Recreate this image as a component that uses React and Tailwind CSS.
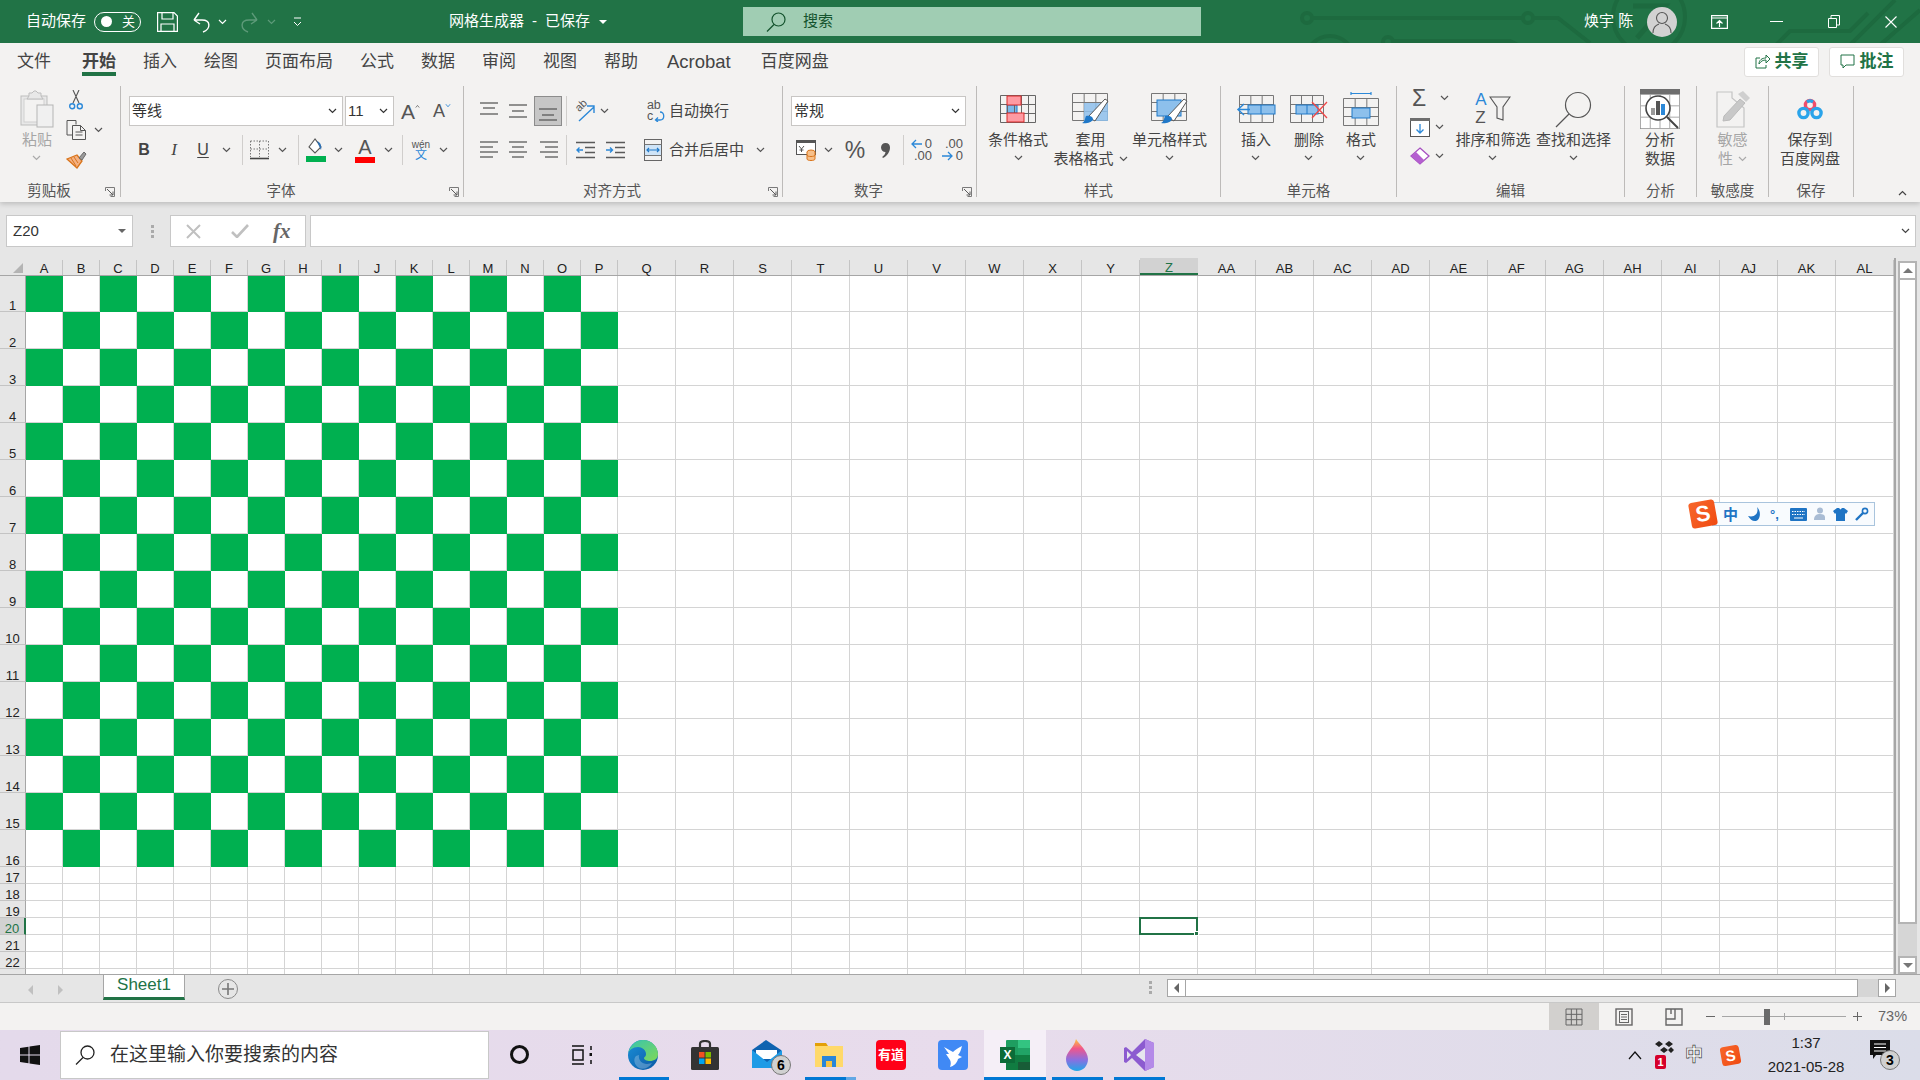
import React from "react";

const COLS = ["A","B","C","D","E","F","G","H","I","J","K","L","M","N","O","P","Q","R","S","T","U","V","W","X","Y","Z","AA","AB","AC","AD","AE","AF","AG","AH","AI","AJ","AK","AL"];
const GRAY = "#5a5a5a";
const BLUE = "#2b88d8";

const Chev = ({ c = "#555", up = false }) => (
  <svg width="9" height="6" viewBox="0 0 9 6" className="shrink-0">
    <path d={up ? "M1 5l3.5-3.5L8 5" : "M1 1l3.5 3.5L8 1"} fill="none" stroke={c} strokeWidth="1.2" />
  </svg>
);

const GridLines = ({ x, y, w, h, cols, rows, c = "#6e6e6e" }) => {
  const v = [], hz = [];
  for (let i = 0; i <= cols; i++) v.push(x + (w * i) / cols);
  for (let i = 0; i <= rows; i++) hz.push(y + (h * i) / rows);
  return (
    <g stroke={c} strokeWidth="1" fill="none">
      {v.map((a) => <path key={"v" + a} d={`M${a} ${y}V${y + h}`} />)}
      {hz.map((a) => <path key={"h" + a} d={`M${x} ${a}H${x + w}`} />)}
    </g>
  );
};

const Lines = ({ rows, w = 18, h = 30 }) => (
  <svg width={w} height={h} viewBox={`0 0 ${w} ${h}`}>
    {rows.map(([a, b, y], i) => <path key={i} d={`M${a} ${y}H${b}`} stroke={GRAY} strokeWidth="1.3" />)}
  </svg>
);

const Launcher = ({ className }) => (
  <svg width="10" height="10" viewBox="0 0 10 10" className={"absolute bottom-0 " + className}>
    <path d="M.5 4V.5H9.5V9.5H5.5" fill="none" stroke="#7a7a7a" />
    <path d="M2 2l6 6M8 4.5V8H4.5" fill="none" stroke="#5a5a5a" />
  </svg>
);

const Group = ({ label, className = "", launcher, children }) => (
  <div className={"relative mt-[6px] flex h-[111px] shrink-0 flex-col border-r border-[#bdbbb9] " + className}>
    <div className="flex-1">{children}</div>
    <div className={"h-[16px] pt-[2px] text-center text-[14.5px] leading-[16px] text-[#555] " + (launcher ? "pr-[22px]" : "")}>{label}</div>
    {launcher}
  </div>
);

const Big = ({ icon, lines, className = "", gray, chev = true, inline }) => (
  <div className={"flex shrink-0 flex-col items-center pt-[4px] " + className}>
    <div className="flex h-[38px] w-full items-center justify-center">{icon}</div>
    <div className={"mt-[2px] flex flex-col items-center whitespace-nowrap text-[15px] leading-[19px] " + (gray ? "text-[#a6a6a6]" : "text-[#444]")}>
      {lines.map((t, i) => (
        <div key={i} className="flex items-center gap-[5px]">
          {t}
          {inline && i === lines.length - 1 && <Chev c={gray ? "#aaa" : "#555"} />}
        </div>
      ))}
      {chev && !inline && <div className="flex h-[18px] items-center"><Chev c={gray ? "#aaa" : "#555"} /></div>}
    </div>
  </div>
);

const Combo = ({ text, className = "" }) => (
  <div className={"flex h-[30px] shrink-0 items-center justify-between border border-[#c8c6c4] bg-white pl-[2px] pr-[5px] text-[15px] text-[#333] " + className}>
    <span>{text}</span>
    <Chev c="#333" />
  </div>
);

const Sep = ({ className = "" }) => <div className={"h-[30px] w-px shrink-0 bg-[#d0cecc] " + className} />;

const Box = ({ className = "", children }) => (
  <div className={"flex h-[30px] shrink-0 items-center justify-center " + className}>{children}</div>
);

const W = ({ className = "" }) => <Box className={"w-[10px] " + className}><Chev /></Box>;

/* ------------------ ribbon drawings ------------------ */
const PasteIcon = () => (
  <svg width="34" height="38" viewBox="0 0 34 38">
    <rect x="1" y="6" width="26" height="29" fill="#e8e8e8" stroke="#bdbdbd" />
    <rect x="4" y="9" width="20" height="23" fill="#f3f2f1" stroke="#cfcfcf" />
    <path d="M9 6V3h3l2-2h2l2 2h3v3l2 3H7z" fill="#e8e8e8" stroke="#bdbdbd" />
    <rect x="17" y="15" width="16" height="22" fill="#f0f0f0" stroke="#b5b5b5" />
  </svg>
);
const CutIcon = () => (
  <svg width="14" height="20" viewBox="0 0 14 20" fill="none">
    <path d="M4 0l6 13M10 0L4 13" stroke="#555" strokeWidth="1.1" />
    <circle cx="3.2" cy="16.3" r="2.5" stroke={BLUE} strokeWidth="1.4" />
    <circle cx="10.8" cy="16.3" r="2.5" stroke={BLUE} strokeWidth="1.4" />
  </svg>
);
const CopyIcon = () => (
  <svg width="21" height="20" viewBox="0 0 21 20" fill="none" stroke="#555">
    <path d="M1 .5h9v4M9 15H1V.5" />
    <path d="M6.5 5.5h8l5 5v9h-13z" fill="#f3f2f1" />
    <path d="M14.5 5.5v5h5M9.5 12h7M9.5 15h7" />
  </svg>
);
const PainterIcon = () => (
  <svg width="21" height="19" viewBox="0 0 21 19" fill="none">
    <path d="M1 9l10-4 5 6-5 7z" fill="#f4b183" stroke="#d9741a" strokeWidth="1.3" />
    <path d="M5 8l5 8M8 7l4 6" stroke="#d9741a" />
    <path d="M13 8l5-6 2 2-4 6z" fill="#9a9a9a" stroke="#6a6a6a" />
  </svg>
);
const BorderIcon = () => (
  <svg width="19" height="20" viewBox="0 0 19 20" fill="none">
    <path d="M.5 1H18.5V17M.5 1V17M9.5 1V17M.5 9H18.5" stroke="#777" strokeDasharray="1.5 1.5" />
    <path d="M0 18.5H19" stroke="#444" strokeWidth="1.6" />
  </svg>
);
const FillIcon = () => (
  <svg width="20" height="24" viewBox="0 0 20 24" fill="none">
    <path d="M9 1L3 9l6 6 6-6z" fill="#fff" stroke="#555" strokeWidth="1.1" />
    <path d="M11 3c3 1 5 4 4 9l-2-4z" fill="#2b6fb3" />
    <rect x="0" y="18" width="20" height="6" fill="#00b050" />
  </svg>
);
const ColorIcon = () => (
  <div className="flex flex-col items-center">
    <span className="text-[20px] leading-[18px] font-light text-[#555]">A</span>
    <span className="mt-[1px] h-[6px] w-[20px] bg-[#ff0000]" />
  </div>
);
const WrapIcon = () => (
  <div className="flex flex-col items-start text-[12.5px] leading-[11px] text-[#555]">
    <span>ab</span>
    <span className="flex items-center">c
      <svg width="12" height="11" viewBox="0 0 12 11" fill="none"><path d="M3 9h4c5 0 5-8 0-8M5 6.5L2.5 9 5 11" stroke={BLUE} strokeWidth="1.3" /></svg>
    </span>
  </div>
);
const MergeIcon = () => (
  <svg width="18" height="22" viewBox="0 0 18 22" fill="none">
    <rect x=".5" y=".5" width="17" height="21" stroke="#666" />
    <path d="M.5 5.5h17M.5 16.5h17" stroke="#777" />
    <rect x="1" y="6" width="16" height="10" fill="#cfe4f7" />
    <path d="M3 11h12M5 9l-2 2 2 2M13 9l2 2-2 2" stroke="#1f78c8" strokeWidth="1.2" />
  </svg>
);
const OrientIcon = () => (
  <div className="relative h-[24px] w-[21px]">
    <span className="absolute left-0 top-[1px] -rotate-45 text-[11px] leading-[11px] text-[#555]">ab</span>
    <svg width="21" height="24" viewBox="0 0 21 24" fill="none" className="absolute left-0 top-0">
      <path d="M4 22L19 8M12 7h7v7" stroke={BLUE} strokeWidth="1.4" />
    </svg>
  </div>
);
const DentIcon = ({ right }) => (
  <svg width="19" height="18" viewBox="0 0 19 18" fill="none">
    <path d="M0 1.5H19M9 6.5H19M9 11.5H19M0 16.5H19" stroke={GRAY} strokeWidth="1.3" />
    <path d={right ? "M0 9H6M4 6.5L6.5 9 4 11.5" : "M7 9H1M3.5 6.5L1 9l2.5 2.5"} stroke={BLUE} strokeWidth="1.4" />
  </svg>
);
const AccIcon = () => (
  <svg width="20" height="22" viewBox="0 0 20 22" fill="none">
    <rect x=".5" y="1.5" width="19" height="14" fill="#fff" stroke="#555" />
    <path d="M.5 3h19" stroke="#555" strokeWidth="2" />
    <path d="M3 7l2.5 3L8 7M5.5 10v3M3.5 11h4" stroke="#555" />
    <ellipse cx="15" cy="13" rx="4" ry="2" fill="#f7c08a" stroke="#d9741a" />
    <path d="M11 13v7c0 2 8 2 8 0v-7" fill="#f7c08a" stroke="#d9741a" />
    <path d="M11 16c0 2 8 2 8 0" stroke="#d9741a" />
  </svg>
);
const IncIcon = ({ dec }) => (
  <div className="relative h-[24px] w-[21px] text-[13px] leading-[12px] text-[#555]">
    <span className="absolute right-0 top-0">{dec ? ".00" : "0"}</span>
    <span className="absolute bottom-0 right-0">{dec ? "0" : ".00"}</span>
    <svg width="12" height="12" viewBox="0 0 12 12" fill="none" className={dec ? "absolute bottom-0 left-0" : "absolute left-0 top-0"}>
      <path d={dec ? "M0 6h10M6 2l4 4-4 4" : "M11 6H1M5 2L1 6l4 4"} stroke={BLUE} strokeWidth="1.3" />
    </svg>
  </div>
);
const CommaIcon = () => (
  <svg width="9" height="15" viewBox="0 0 9 15" fill="#555">
    <path d="M4.5 0C7.5 0 9 2 9 4.5 9 9 6 13 2 15L1.2 14c2-1.5 3-3 3.3-5C2 9 0 7 0 4.5 0 2 2 0 4.5 0z" />
  </svg>
);
const CondIcon = () => (
  <svg width="36" height="28" viewBox="0 0 36 28">
    <rect x="7" y="10" width="10" height="8" fill="#7db8e8" stroke="#1f78c8" />
    <GridLines x={.5} y={.5} w={35} h={27} cols={5} rows={3} c="#666" />
    <rect x="7" y="1" width="14" height="9" fill="#ff9aa2" stroke="#d92b2b" />
    <rect x="7" y="18" width="17" height="9" fill="#ff9aa2" stroke="#d92b2b" />
  </svg>
);
const Brush = ({ x = 0 }) => (
  <g transform={`translate(${x} 0)`}>
    <path d="M13 24L30 6l3 2-13 20z" fill="#fff" stroke="#555" />
    <path d="M11 23c4-1 7 1 7 3-1 4-8 5-11 4 3-1 3-5 4-7z" fill="#1f78c8" />
  </g>
);
const TableIcon = () => (
  <svg width="37" height="32" viewBox="0 0 37 32">
    <GridLines x={.5} y={.5} w={35} h={27} cols={3} rows={3} c="#777" />
    <rect x="12" y="10" width="24" height="18" fill="#8dc0ec" fillOpacity=".85" />
    <Brush x={3} />
  </svg>
);
const StyleIcon = () => (
  <svg width="37" height="32" viewBox="0 0 37 32">
    <GridLines x={.5} y={.5} w={35} h={27} cols={3} rows={3} c="#777" />
    <rect x="6" y="7" width="24" height="16" fill="#8dc0ec" stroke="#1f78c8" />
    <Brush x={3} />
  </svg>
);
const InsertIcon = () => (
  <svg width="40" height="28" viewBox="0 0 40 28">
    <GridLines x={3.5} y={.5} w={34} h={27} cols={3} rows={3} c="#777" />
    <rect x="12" y="10" width="27" height="9" fill="#8dc0ec" stroke="#1f78c8" />
    <path d="M25 10v9" stroke="#1f78c8" />
    <path d="M14 14.5H2M8 9l-6 5.5L8 20" fill="none" stroke={BLUE} strokeWidth="1.5" />
  </svg>
);
const DeleteIcon = () => (
  <svg width="38" height="28" viewBox="0 0 38 28">
    <GridLines x={.5} y={.5} w={33} h={27} cols={3} rows={3} c="#777" />
    <rect x="6" y="10" width="22" height="9" fill="#8dc0ec" stroke="#1f78c8" />
    <path d="M17 10v9" stroke="#1f78c8" />
    <path d="M22 7l15 16M37 7L22 23" stroke="#f04848" strokeWidth="1.3" />
  </svg>
);
const FormatIcon = () => (
  <svg width="36" height="34" viewBox="0 0 36 34">
    <path d="M8 1.5H28M8 0v3M28 0v3" stroke={BLUE} strokeWidth="1.2" />
    <GridLines x={.5} y={6.5} w={35} h={27} cols={3} rows={3} c="#777" />
    <rect x="9" y="16" width="18" height="10" fill="#8dc0ec" stroke="#1f78c8" />
  </svg>
);
const SortIcon = () => (
  <div className="flex items-center">
    <div className="flex flex-col text-[17px] font-light leading-[18px]">
      <span className="text-[#2b88d8]">A</span>
      <span className="text-[#555]">Z</span>
    </div>
    <svg width="22" height="26" viewBox="0 0 22 26" fill="none" className="ml-[2px]">
      <path d="M1 1h20l-7 10v13l-6-2V11z" stroke="#555" strokeWidth="1.1" />
    </svg>
  </div>
);
const FindIcon = () => (
  <svg width="37" height="37" viewBox="0 0 37 37" fill="none">
    <circle cx="23" cy="14" r="12.5" stroke="#555" strokeWidth="1.2" />
    <path d="M14 23L1 36" stroke="#555" strokeWidth="1.3" />
  </svg>
);
const AnalyzeIcon = () => (
  <svg width="40" height="40" viewBox="0 0 40 40" fill="none">
    <rect x=".5" y=".5" width="39" height="39" fill="#fff" stroke="#555" />
    <rect x="0" y="0" width="40" height="5" fill="#6e6e6e" />
    <GridLines x={.5} y={5.5} w={39} h={34} cols={4} rows={3} c="#aaa" />
    <circle cx="18" cy="19" r="12" fill="#fff" stroke="#444" strokeWidth="1.6" />
    <rect x="11" y="19" width="4" height="7" fill="#9a9a9a" />
    <rect x="16" y="12" width="4" height="14" fill="#555" />
    <rect x="21" y="15" width="4" height="11" fill={BLUE} />
    <path d="M27 28l11 11" stroke="#444" strokeWidth="2" />
  </svg>
);
const SensIcon = () => (
  <svg width="34" height="37" viewBox="0 0 34 37" fill="none">
    <path d="M1 1h15v6l12 10v19H1z" fill="#f3f2f1" stroke="#c4c4c4" strokeWidth="1.2" />
    <path d="M8 25L24 8l5 4-15 17-7 1z" fill="#c8c8c8" stroke="#bbb" />
    <path d="M22 3l5-3 7 7-4 4z" fill="#cfcfcf" />
  </svg>
);
const BaiduIcon = () => (
  <svg width="26" height="22" viewBox="0 0 26 22" fill="none">
    <circle cx="13" cy="7" r="4.6" stroke="#ef4f6c" strokeWidth="3.4" />
    <circle cx="6.5" cy="15" r="4.6" stroke="#2aa4ea" strokeWidth="3.4" />
    <circle cx="19.5" cy="15" r="4.6" stroke="#2aa4ea" strokeWidth="3.4" />
    <path d="M10 4a5 5 0 016 0" stroke="#2aa4ea" strokeWidth="3" />
  </svg>
);

/* ------------------ taskbar drawings ------------------ */
const Edge = () => (
  <svg width="32" height="32" viewBox="0 0 32 32">
    <defs>
      <linearGradient id="eg" x1="0" y1="0" x2="1" y2="1"><stop offset="0" stopColor="#36c4b0" /><stop offset="1" stopColor="#7fd858" /></linearGradient>
      <linearGradient id="eb" x1="0" y1="0" x2="1" y2="1"><stop offset="0" stopColor="#1a8fd8" /><stop offset="1" stopColor="#0c59a4" /></linearGradient>
    </defs>
    <circle cx="16" cy="16" r="15" fill="url(#eb)" />
    <path d="M1 15C3 5 10 1 16 1c9 0 15 7 15 14 0 5-4 7-8 7-3 0-6-1-6-3 0-1 2-1 2-4 0-4-4-7-8-7-5 0-9 3-10 7z" fill="url(#eg)" />
    <path d="M12 16c-1 5 3 9 8 9 2 0 4-1 5-1-3 5-9 7-13 5-5-3-6-9-3-12z" fill="#fff" fillOpacity=".25" />
  </svg>
);
const Store = () => (
  <svg width="30" height="30" viewBox="0 0 30 30">
    <path d="M10 7V4c0-4 10-4 10 0v3" fill="none" stroke="#333" strokeWidth="2.2" />
    <rect x="1" y="7" width="28" height="23" rx="1.5" fill="#333" />
    <rect x="9" y="12" width="5.5" height="5.5" fill="#f25022" />
    <rect x="15.5" y="12" width="5.5" height="5.5" fill="#7fba00" />
    <rect x="9" y="18.5" width="5.5" height="5.5" fill="#00a4ef" />
    <rect x="15.5" y="18.5" width="5.5" height="5.5" fill="#ffb900" />
  </svg>
);
const Mail = () => (
  <div className="relative h-[30px] w-[32px]">
    <svg width="32" height="30" viewBox="0 0 32 30">
      <path d="M1 10L15 0l15 10v17H1z" fill="#0f63b0" />
      <path d="M5 10h21v9H5z" fill="#fff" />
      <path d="M1 10l15 12 15-12v18H1z" fill="#1e9be6" />
    </svg>
    <span className="absolute -bottom-[5px] -right-[8px] flex h-[20px] w-[20px] items-center justify-center rounded-full border border-[#777] bg-[#d0d0d0] text-[14px] font-bold leading-none text-black">6</span>
  </div>
);
const Folder = () => (
  <svg width="28" height="28" viewBox="0 0 28 28">
    <path d="M0 2h11l2 3H0z" fill="#e3a008" />
    <rect x="0" y="5" width="28" height="21" fill="#ffd96a" />
    <path d="M7 15h14v11h-4v-6h-6v6H7z" fill="#2a86d8" />
    <rect x="11" y="20" width="6" height="6" fill="#f6c342" />
  </svg>
);
const Bird = () => (
  <div className="flex h-[30px] w-[30px] items-center justify-center rounded-[4px] bg-[#4089f5]">
    <svg width="24" height="24" viewBox="0 0 24 24"><path d="M3 4l9 5c2-2 5-4 9-6-1 4-2 7-4 9l4 2-4 2c-1 4-4 7-8 8 1-3 1-5 0-7L5 11l3 0z" fill="#fff" /></svg>
  </div>
);
const ExcelIcon = () => (
  <div className="relative h-[32px] w-[30px]">
    <svg width="30" height="32" viewBox="0 0 30 32" className="absolute right-0 top-0">
      <rect x="6" y="1" width="24" height="30" rx="1" fill="#1e9e60" />
      <rect x="18" y="1" width="12" height="8" fill="#33c481" />
      <rect x="18" y="9" width="12" height="7" fill="#21a366" />
      <rect x="6" y="16" width="24" height="15" fill="#107c41" />
      <rect x="18" y="23" width="12" height="8" fill="#185c37" />
    </svg>
    <span className="absolute left-0 top-[8px] flex h-[16px] w-[15px] items-center justify-center bg-[#0c6b38] text-[12px] font-bold text-white">X</span>
  </div>
);
const Paint = () => (
  <svg width="24" height="32" viewBox="0 0 24 32">
    <defs>
      <linearGradient id="pg" x1="0" y1="0" x2="0" y2="1">
        <stop offset="0" stopColor="#ffc83d" /><stop offset=".3" stopColor="#f0568c" /><stop offset=".65" stopColor="#8a6fe0" /><stop offset="1" stopColor="#1fa8e8" />
      </linearGradient>
    </defs>
    <path d="M11 0c2 4 12 12 12 20 0 7-5 12-11 12S1 27 1 20c0-7 8-11 10-20z" fill="url(#pg)" />
  </svg>
);
const VS = () => (
  <svg width="30" height="32" viewBox="0 0 30 32">
    <path d="M21 0l9 4v24l-9 4-13-13-6 5-2-1V9l2-1 6 5z" fill="#8c5bd0" />
    <path d="M21 0l9 4v24l-9 4z" fill="#b48ae8" />
    <path d="M21 9v14l-9-7z" fill="#e6e6ee" />
    <path d="M3 12v8l4-4z" fill="#e6e6ee" />
  </svg>
);
const Slot = ({ className = "", bar, children }) => (
  <div className={"relative flex h-full shrink-0 items-center justify-center pb-[1px] " + className}>
    {children}
    {bar}
  </div>
);
const Bar = ({ className = "" }) => <span className={"absolute bottom-0 h-[3px] " + className} />;

const Sogou = ({ size = "w-[24px] h-[24px] text-[20px]" }) => (
  <span className={"flex shrink-0 -rotate-[10deg] items-center justify-center rounded-[3px] bg-gradient-to-br from-[#f7662a] to-[#f04a10] font-bold leading-none text-white " + size}>S</span>
);

/* ------------------ app ------------------ */
export default function App() {
  const rows = [];
  for (let r = 1; r <= 23; r++) rows.push(r);

  return (
    <div className="relative flex h-[1080px] w-[1920px] flex-col overflow-hidden bg-[#e6e6e6] font-['Liberation_Sans','Noto_Sans_CJK_SC',sans-serif]">
      {/* title bar */}
      <div className="relative flex h-[43px] shrink-0 items-center bg-[#217346] text-white">
        <svg width="1920" height="43" viewBox="0 0 1920 43" className="absolute left-0 top-0" fill="none" stroke="#1d6a3f" strokeWidth="4">
          <circle cx="1307" cy="18" r="5" />
          <circle cx="1528" cy="18" r="5" />
          <path d="M1312 18H1523M1533 18H1558L1590 43" />
          <circle cx="1330" cy="60" r="24" />
          <circle cx="1388" cy="42" r="5" />
          <path d="M1393 41H1510L1520 46" />
          <circle cx="1649" cy="17" r="36" />
          <path d="M1633 6H1665L1637 38" strokeWidth="5" />
          <path d="M1776 45L1790 31H1850L1868 13M1850 45L1895 0M1880 45L1920 10" />
        </svg>
        <div className="relative flex h-full w-[449px] shrink-0 items-center">
          <span className="ml-[26px] whitespace-nowrap text-[15px]">自动保存</span>
          <div className="ml-[8px] flex h-[20px] w-[47px] items-center rounded-full border border-white pl-[6px]">
            <span className="h-[11px] w-[11px] rounded-full bg-white" />
            <span className="ml-[10px] text-[13px] leading-none">关</span>
          </div>
          <svg width="21" height="20" viewBox="0 0 21 20" fill="none" stroke="#fff" strokeWidth="1.2" className="ml-[16px]">
            <path d="M.6.6H17l3.4 3.4V19.4H.6zM5 .6v6.4h11V.6M4 19.4v-7.4h13v7.4" />
          </svg>
          <svg width="20" height="22" viewBox="0 0 20 22" fill="none" stroke="#fff" strokeWidth="1.4" className="ml-[14px]">
            <path d="M2 9h8c9 0 9 9 1 12M2 9l5-7M2 9l6 4" />
          </svg>
          <span className="ml-[6px]"><Chev c="#fff" /></span>
          <svg width="19" height="22" viewBox="0 0 19 22" fill="none" stroke="#5d9a79" strokeWidth="1.4" className="ml-[13px]">
            <path d="M17 9H9c-9 0-9 9-1 12M17 9l-5-7M17 9l-6 4" />
          </svg>
          <span className="ml-[8px]"><Chev c="#5d9a79" /></span>
          <svg width="9" height="10" viewBox="0 0 9 10" fill="none" stroke="#fff" className="ml-[17px]">
            <path d="M1 1h7M1 5l3.5 3.5L8 5" />
          </svg>
        </div>
        <div className="relative flex w-[294px] shrink-0 items-center whitespace-nowrap text-[15px]">
          <span>网格生成器</span>
          <span className="ml-[8px]">-</span>
          <span className="ml-[8px]">已保存</span>
          <span className="ml-[9px] h-0 w-0 border-x-[4px] border-t-[4px] border-x-transparent border-t-white" />
        </div>
        <div className="relative flex h-[29px] w-[458px] shrink-0 items-center bg-[#a0cdb3] text-[15px] text-[#14532d]">
          <svg width="20" height="20" viewBox="0 0 20 20" fill="none" stroke="#14532d" strokeWidth="1.2" className="ml-[23px]">
            <circle cx="12.5" cy="7.5" r="6.5" /><path d="M8 12.5L1 19.5" />
          </svg>
          <span className="ml-[17px]">搜索</span>
        </div>
        <span className="relative ml-[383px] w-[50px] shrink-0 whitespace-nowrap text-[15px]">焕宇 陈</span>
        <div className="relative ml-[13px] flex h-[30px] w-[30px] shrink-0 items-center justify-center rounded-full bg-[#d2d2d2]">
          <svg width="20" height="22" viewBox="0 0 20 22" fill="none" stroke="#555" strokeWidth="1.1">
            <circle cx="10" cy="7" r="5.5" /><path d="M1 22c0-5 3-8 6-9M19 22c0-5-3-8-6-9" />
          </svg>
        </div>
        <svg width="17" height="14" viewBox="0 0 17 14" fill="none" stroke="#fff" strokeWidth="1.2" className="relative ml-[34px]">
          <path d="M.6.6h15.8v12.8H.6zM.6 3h15.8M8.5 12V6M5.5 8.5l3-3 3 3" />
        </svg>
        <span className="relative ml-[42px] h-[1px] w-[13px] bg-white" />
        <svg width="12" height="13" viewBox="0 0 12 13" fill="none" stroke="#fff" className="relative ml-[45px]">
          <path d="M.5 3.5h8v9h-8zM3 3.5V.5h8.5V10H8.5" />
        </svg>
        <svg width="12" height="12" viewBox="0 0 12 12" fill="none" stroke="#fff" strokeWidth="1.1" className="relative ml-[45px]">
          <path d="M.5.5l11 11M11.5.5l-11 11" />
        </svg>
      </div>

      {/* tabs and ribbon */}
      <div className="flex h-[159px] shrink-0 flex-col bg-[#f3f2f1] shadow-[0_2px_5px_rgba(0,0,0,0.18)]">
        <div className="flex h-[37px] shrink-0 items-center pl-[17px] text-[17px] text-[#444]">
          <div className="flex gap-[27px] whitespace-nowrap">
            <span>文件</span>
            <span className="relative ml-[4px] font-bold">开始<span className="absolute left-0 right-0 top-[23px] h-[4px] bg-[#217346]" /></span>
            <span>插入</span>
            <span>绘图</span>
            <span>页面布局</span>
            <span>公式</span>
            <span>数据</span>
            <span>审阅</span>
            <span>视图</span>
            <span>帮助</span>
            <span className="ml-[2px] text-[18.5px] leading-[25px]">Acrobat</span>
            <span className="ml-[3px]">百度网盘</span>
          </div>
          <div className="ml-auto mr-[16px] flex gap-[10px] text-[17px] font-bold text-[#217346]">
            <div className="flex h-[30px] w-[75px] items-center justify-center gap-[5px] rounded-[3px] border border-[#e1dfdd] bg-white">
              <svg width="15" height="15" viewBox="0 0 15 15" fill="none" stroke="#217346"><path d="M5 4H1v10h10v-3M4 10c0-4 3-6 7-6V1l4 4-4 4V6c-3 0-5 1-7 4z" /></svg>
              共享
            </div>
            <div className="flex h-[30px] w-[75px] items-center justify-center gap-[5px] rounded-[3px] border border-[#e1dfdd] bg-white">
              <svg width="15" height="15" viewBox="0 0 15 15" fill="none" stroke="#217346"><path d="M1 1h13v10H6l-3 3v-3H1z" /></svg>
              批注
            </div>
          </div>
        </div>

        <div className="flex flex-1">
          <Group label="剪贴板" className="w-[121px]" launcher={<Launcher className="right-[5px]" />}>
            <div className="flex">
              <Big className="ml-[19px] w-[36px]" icon={<PasteIcon />} lines={["粘贴"]} gray />
              <div className="ml-[11px] flex flex-col pt-[4px]">
                <div className="ml-[3px]"><CutIcon /></div>
                <div className="mt-[10px] flex items-center"><CopyIcon /><span className="ml-[7px]"><Chev /></span></div>
                <div className="mt-[10px]"><PainterIcon /></div>
              </div>
            </div>
          </Group>

          <Group label="字体" className="w-[343px]" launcher={<Launcher className="right-[4px]" />}>
            <div className="mt-[10px] flex h-[30px] items-center">
              <Combo text="等线" className="ml-[8px] w-[214px]" />
              <Combo text="11" className="ml-[2px] w-[49px]" />
              <span className="ml-[7px] flex w-[19px] items-start text-[21px] font-light leading-none text-[#555]">A<svg width="7" height="5" viewBox="0 0 7 5" fill="none" className="mt-[3px]"><path d="M1 4l2.5-3L6 4" stroke="#555" /></svg></span>
              <span className="ml-[13px] flex w-[18px] items-start text-[18px] font-light leading-none text-[#555]">A<svg width="7" height="5" viewBox="0 0 7 5" fill="none" className="mt-[1px]"><path d="M1 1l2.5 3L6 1" stroke={BLUE} /></svg></span>
            </div>
            <div className="mt-[9px] flex h-[30px] items-center text-[#444]">
              <Box className="ml-[11px] w-[24px] text-[16px] font-bold">B</Box>
              <Box className="ml-[6px] w-[24px] text-[17px] italic font-['Liberation_Serif',serif]">I</Box>
              <Box className="ml-[5px] w-[24px] text-[16px] underline underline-offset-2">U</Box>
              <W className="ml-[6px]" />
              <Sep className="ml-[11px]" />
              <Box className="ml-[7px] w-[19px]"><BorderIcon /></Box>
              <W className="ml-[8px]" />
              <Sep className="ml-[11px]" />
              <Box className="ml-[7px] w-[20px]"><FillIcon /></Box>
              <W className="ml-[7px]" />
              <Box className="ml-[12px] w-[20px]"><ColorIcon /></Box>
              <W className="ml-[8px]" />
              <Sep className="ml-[9px]" />
              <Box className="ml-[8px] w-[20px]">
                <div className="flex flex-col items-center text-[10px] leading-[11px] text-[#555]">
                  <span>wén</span><span className="text-[12px] text-[#2b88d8]">文</span>
                </div>
              </Box>
              <W className="ml-[7px]" />
            </div>
          </Group>

          <Group label="对齐方式" className="w-[319px]" launcher={<Launcher className="right-[4px]" />}>
            <div className="mt-[10px] flex h-[30px] items-center">
              <Box className="ml-[16px] w-[18px]"><Lines rows={[[0, 18, 7], [3, 15, 12], [0, 18, 18]]} /></Box>
              <Box className="ml-[11px] w-[18px]"><Lines rows={[[0, 18, 9], [3, 15, 15], [0, 18, 21]]} /></Box>
              <Box className="ml-[7px] w-[28px] border border-[#8c8c8c] bg-[#c6c6c6]"><Lines rows={[[0, 18, 13], [3, 15, 19], [0, 18, 24]]} /></Box>
              <Sep className="ml-[4px]" />
              <Box className="ml-[8px] w-[21px]"><OrientIcon /></Box>
              <W className="ml-[3px]" />
              <Box className="ml-[38px] w-[18px]"><WrapIcon /></Box>
              <span className="ml-[4px] whitespace-nowrap text-[15px] text-[#444]">自动换行</span>
            </div>
            <div className="mt-[9px] flex h-[30px] items-center">
              <Box className="ml-[16px] w-[18px]"><Lines rows={[[0, 18, 7], [0, 13, 12], [0, 18, 17], [0, 13, 22]]} /></Box>
              <Box className="ml-[11px] w-[18px]"><Lines rows={[[0, 18, 7], [3, 15, 12], [0, 18, 17], [3, 15, 22]]} /></Box>
              <Box className="ml-[13px] w-[18px]"><Lines rows={[[0, 18, 7], [5, 18, 12], [0, 18, 17], [5, 18, 22]]} /></Box>
              <Sep className="ml-[8px]" />
              <Box className="ml-[9px] w-[19px]"><DentIcon /></Box>
              <Box className="ml-[11px] w-[19px]"><DentIcon right /></Box>
              <Box className="ml-[19px] w-[18px]"><MergeIcon /></Box>
              <span className="ml-[7px] w-[75px] shrink-0 whitespace-nowrap text-[15px] text-[#444]">合并后居中</span>
              <W className="ml-[11px]" />
            </div>
          </Group>

          <Group label="数字" className="w-[194px]" launcher={<Launcher className="right-[4px]" />}>
            <div className="mt-[10px] flex h-[30px] items-center">
              <Combo text="常规" className="ml-[8px] w-[175px]" />
            </div>
            <div className="mt-[9px] flex h-[30px] items-center">
              <Box className="ml-[13px] w-[20px]"><AccIcon /></Box>
              <W className="ml-[7px]" />
              <Box className="ml-[13px] w-[18px] text-[23px] font-light text-[#555]">%</Box>
              <Box className="ml-[17px] w-[9px]"><CommaIcon /></Box>
              <Sep className="ml-[13px]" />
              <Box className="ml-[7px] w-[21px]"><IncIcon /></Box>
              <Box className="ml-[10px] w-[21px]"><IncIcon dec /></Box>
            </div>
          </Group>

          <Group label="样式" className="w-[244px]">
            <div className="flex">
              <Big className="ml-[11px] w-[60px]" icon={<CondIcon />} lines={["条件格式"]} />
              <Big className="ml-[5px] w-[75px]" icon={<TableIcon />} lines={["套用", "表格格式"]} inline />
              <Big className="ml-[4px] w-[75px]" icon={<StyleIcon />} lines={["单元格样式"]} />
            </div>
          </Group>

          <Group label="单元格" className="w-[176px]">
            <div className="flex">
              <Big className="ml-[15px] w-[40px]" icon={<InsertIcon />} lines={["插入"]} />
              <Big className="ml-[14px] w-[38px]" icon={<DeleteIcon />} lines={["删除"]} />
              <Big className="ml-[14px] w-[38px]" icon={<FormatIcon />} lines={["格式"]} />
            </div>
          </Group>

          <Group label="编辑" className="w-[228px]">
            <div className="flex">
              <div className="ml-[13px] flex w-[40px] shrink-0 flex-col pt-[3px]">
                <div className="flex h-[18px] items-center">
                  <span className="ml-[2px] w-[22px] text-[23px] font-light leading-none text-[#555]">Σ</span>
                  <span className="ml-[6px]"><Chev /></span>
                </div>
                <div className="mt-[11px] flex h-[18px] items-center">
                  <svg width="20" height="19" viewBox="0 0 20 19" fill="none">
                    <rect x=".5" y=".5" width="19" height="18" fill="#fff" stroke="#555" />
                    <rect x="0" y="0" width="20" height="3" fill="#6e6e6e" />
                    <path d="M10 6v9M6.5 11.5L10 15l3.5-3.5" stroke={BLUE} strokeWidth="1.3" />
                  </svg>
                  <span className="ml-[5px]"><Chev /></span>
                </div>
                <div className="mt-[11px] flex h-[18px] items-center">
                  <svg width="20" height="18" viewBox="0 0 20 18" fill="none">
                    <path d="M10 1l9 8-9 8-9-8z" fill="#fff" stroke="#a64fc0" strokeWidth="1.3" />
                    <path d="M1 9l5-4 8 8-4 4z" fill="#b45fd0" />
                  </svg>
                  <span className="ml-[5px]"><Chev /></span>
                </div>
              </div>
              <Big className="ml-[5px] w-[76px]" icon={<SortIcon />} lines={["排序和筛选"]} />
              <Big className="ml-[5px] w-[75px]" icon={<FindIcon />} lines={["查找和选择"]} />
            </div>
          </Group>

          <Group label="分析" className="w-[72px]">
            <div className="flex">
              <Big className="ml-[15px] w-[40px]" icon={<AnalyzeIcon />} lines={["分析", "数据"]} chev={false} />
            </div>
          </Group>

          <Group label="敏感度" className="w-[72px]">
            <div className="flex">
              <Big className="ml-[18px] w-[35px]" icon={<SensIcon />} lines={["敏感", "性"]} gray inline />
            </div>
          </Group>

          <Group label="保存" className="w-[85px]">
            <div className="flex">
              <Big className="ml-[11px] w-[60px]" icon={<BaiduIcon />} lines={["保存到", "百度网盘"]} chev={false} />
            </div>
          </Group>

          <div className="flex flex-1 items-end justify-end pb-[6px] pr-[13px]"><Chev c="#444" up /></div>
        </div>
      </div>

      {/* formula bar */}
      <div className="flex h-[56px] shrink-0 items-start pt-[13px]">
        <div className="ml-[6px] flex h-[32px] w-[127px] items-center justify-between border border-[#c8c8c8] bg-white pl-[6px] pr-[6px] text-[15px] text-[#333]">
          Z20
          <span className="h-0 w-0 border-x-[4px] border-t-[4px] border-x-transparent border-t-[#666]" />
        </div>
        <div className="ml-[18px] flex h-[32px] flex-col justify-center gap-[2px]">
          <span className="h-[3px] w-[3px] bg-[#aaa]" /><span className="h-[3px] w-[3px] bg-[#aaa]" /><span className="h-[3px] w-[3px] bg-[#aaa]" />
        </div>
        <div className="ml-[16px] flex h-[32px] w-[136px] items-center border border-[#c8c8c8] bg-white">
          <svg width="15" height="15" viewBox="0 0 15 15" fill="none" stroke="#c0c0c0" strokeWidth="2" className="ml-[15px]"><path d="M1 1l13 13M14 1L1 14" /></svg>
          <svg width="18" height="14" viewBox="0 0 18 14" fill="none" stroke="#c0c0c0" strokeWidth="2.6" className="ml-[30px]"><path d="M1 8l5 5L17 1" /></svg>
          <span className="ml-[24px] text-[21px] font-bold italic leading-none text-[#666] font-['Liberation_Serif',serif]">fx</span>
        </div>
        <div className="ml-[4px] flex h-[32px] w-[1606px] items-center justify-end border border-[#c8c8c8] bg-white pr-[5px]"><Chev c="#444" /></div>
      </div>

      {/* sheet */}
      <div className="flex min-h-0 flex-1">
        <div className="flex w-[1896px] shrink-0 flex-col overflow-hidden border-r-2 border-[#a6a6a6]">
          <div className="grid h-[18px] shrink-0 grid-cols-[26px_repeat(16,37px)_repeat(22,58px)] border-b border-[#a6a6a6] text-[13px] leading-[13px] text-[#222]">
            <div className="flex items-end justify-end pb-[2px] pr-[3px]">
              <span className="h-0 w-0 border-b-[10px] border-l-[10px] border-b-[#b4b4b4] border-l-transparent" />
            </div>
            {COLS.map((c) => (
              c === "Z"
                ? <div key={c} className="flex items-end justify-center border-b-2 border-[#217346] bg-[#d2d2d2] leading-[11px] text-[#217346]">{c}</div>
                : <div key={c} className="flex items-end justify-center"><span className="flex-1 text-center">{c}</span><span className="h-[15px] w-px bg-[#c4c4c4]" /></div>
            ))}
          </div>
          {rows.map((r) => (
            <div key={r} className={"grid shrink-0 grid-cols-[26px_repeat(16,37px)_repeat(22,58px)] " + (r === 1 ? "h-[36px]" : r <= 16 ? "h-[37px]" : "h-[17px]")}>
              <div className={"flex items-end justify-center border-b border-[#c4c4c4] text-[13px] leading-[11px] " + (r === 20 ? "border-r-2 border-r-[#217346] bg-[#d2d2d2] text-[#217346]" : "border-r border-r-[#a6a6a6] text-[#222]")}>{r < 23 ? r : ""}</div>
              {COLS.map((c, i) => {
                const green = r <= 16 && i < 16 && (r + i) % 2 === 1;
                return (
                  <div key={c} className={"relative " + (green ? "bg-[#00b050]" : "border-b border-r border-[#d4d4d4] bg-white")}>
                    {c === "Z" && r === 20 && (
                      <div className="absolute -left-px -top-px z-10 h-[18px] w-[59px] border-2 border-[#217346]">
                        <span className="absolute -bottom-[3px] -right-[3px] h-[5px] w-[5px] border border-white bg-[#217346]" />
                      </div>
                    )}
                  </div>
                );
              })}
            </div>
          ))}
        </div>
        <div className="flex flex-1 flex-col pl-[2px] pr-[3px] pt-[3px]">
          <div className="flex h-[19px] items-center justify-center border-2 border-[#b4b4b4] bg-white">
            <span className="h-0 w-0 border-x-[5px] border-b-[5px] border-x-transparent border-b-[#777]" />
          </div>
          <div className="h-[644px] border-x-2 border-b-2 border-[#b4b4b4] bg-white" />
          <div className="flex-1 bg-[#d6d6d6]" />
          <div className="flex h-[18px] items-center justify-center border-2 border-[#b4b4b4] bg-white">
            <span className="h-0 w-0 border-x-[5px] border-t-[5px] border-x-transparent border-t-[#777]" />
          </div>
        </div>
      </div>

      {/* sheet tabs */}
      <div className="flex h-[29px] shrink-0 items-start border-y border-[#a6a6a6] border-b-[#c8c8c8] bg-[#e6e6e6]">
        <span className="ml-[28px] mt-[10px] h-0 w-0 border-y-[5px] border-r-[5px] border-y-transparent border-r-[#c0c0c0]" />
        <span className="ml-[25px] mt-[10px] h-0 w-0 border-y-[5px] border-l-[5px] border-y-transparent border-l-[#c0c0c0]" />
        <div className="ml-[40px] flex h-[25px] w-[82px] items-center justify-center border-x border-b-[3px] border-[#a6a6a6] border-b-[#217346] bg-white pb-[2px] text-[17px] text-[#217346]">Sheet1</div>
        <div className="ml-[33px] mt-[4px] flex h-[20px] w-[20px] items-center justify-center rounded-full border border-[#8a8a8a]">
          <svg width="12" height="12" viewBox="0 0 12 12" stroke="#777" strokeWidth="1.6"><path d="M6 0v12M0 6h12" /></svg>
        </div>
        <div className="ml-[911px] mt-[6px] flex flex-col gap-[2px]">
          <span className="h-[3px] w-[3px] bg-[#aaa]" /><span className="h-[3px] w-[3px] bg-[#aaa]" /><span className="h-[3px] w-[3px] bg-[#aaa]" />
        </div>
        <div className="ml-[15px] mt-[4px] flex h-[18px] w-[729px]">
          <div className="flex w-[19px] items-center justify-center border border-[#a6a6a6] bg-white">
            <span className="h-0 w-0 border-y-[5px] border-r-[5px] border-y-transparent border-r-[#666]" />
          </div>
          <div className="w-[672px] border-y border-r border-[#a6a6a6] bg-white" />
          <div className="flex-1 bg-[#d6d6d6]" />
          <div className="flex w-[18px] items-center justify-center border border-[#a6a6a6] bg-white">
            <span className="h-0 w-0 border-y-[5px] border-l-[5px] border-y-transparent border-l-[#666]" />
          </div>
        </div>
      </div>

      {/* status bar */}
      <div className="flex h-[27px] shrink-0 items-center bg-[#f3f2f1] pl-[1549px] text-[#666]">
        <div className="flex h-full w-[50px] items-center justify-center bg-[#d2d0ce]">
          <svg width="18" height="18" viewBox="0 0 18 18"><GridLines x={1} y={1} w={16} h={16} cols={3} rows={3} c="#666" /></svg>
        </div>
        <svg width="18" height="18" viewBox="0 0 18 18" fill="none" stroke="#666" className="ml-[16px]"><rect x="1" y="1" width="16" height="16" strokeWidth="1.4" /><rect x="4.5" y="3.5" width="9" height="11" /><path d="M6 6.5h6M6 9h6M6 11.5h6" /></svg>
        <svg width="18" height="18" viewBox="0 0 18 18" fill="none" stroke="#666" strokeWidth="1.4" className="ml-[32px]"><path d="M1 1h16v16H1zM1 11h9V1M6 1v5" /></svg>
        <span className="ml-[23px] h-px w-[9px] bg-[#666]" />
        <div className="relative ml-[7px] flex h-[17px] w-[124px] items-center">
          <span className="h-px w-full bg-[#a6a6a6]" />
          <span className="absolute left-[42px] h-[16px] w-[6px] bg-[#6a6a6a]" />
          <span className="absolute left-[62px] h-[7px] w-px bg-[#a6a6a6]" />
        </div>
        <svg width="9" height="9" viewBox="0 0 9 9" stroke="#666" className="ml-[7px]"><path d="M4.5 0v9M0 4.5h9" /></svg>
        <span className="ml-[16px] text-[14.5px]">73%</span>
      </div>

      {/* taskbar */}
      <div className="flex h-[50px] shrink-0 items-center bg-gradient-to-r from-[#e4daeb] via-[#e8dcec] to-[#dbdde9]">
        <div className="flex h-full w-[60px] shrink-0 items-center justify-center">
          <svg width="20" height="20" viewBox="0 0 20 20" fill="#111"><path d="M0 3l8.5-1.2V9.5H0zM9.5 1.6L20 0v9.5H9.5zM0 10.5h8.5v7.7L0 17zM9.5 10.5H20V20L9.5 18.4z" /></svg>
        </div>
        <div className="flex h-[48px] w-[429px] shrink-0 items-center border border-[#c8c8c8] bg-white text-[19px] text-[#333]">
          <svg width="20" height="20" viewBox="0 0 20 20" fill="none" stroke="#222" strokeWidth="1.3" className="ml-[14px]"><circle cx="12.5" cy="7.5" r="6.5" /><path d="M8 12.5L1 19.5" /></svg>
          <span className="ml-[15px] whitespace-nowrap">在这里输入你要搜索的内容</span>
        </div>
        <Slot className="w-[61px]"><span className="h-[19px] w-[19px] rounded-full border-[3px] border-[#111]" /></Slot>
        <Slot className="w-[62px]">
          <svg width="21" height="20" viewBox="0 0 21 20" fill="none" stroke="#111" strokeWidth="1.5"><path d="M1 1h12M1 19h12M2 5h10v10H2zM20 1v4M20 15v4" /><rect x="18.5" y="8" width="3" height="3" fill="#111" stroke="none" /></svg>
        </Slot>
        <Slot className="w-[62px]" bar={<Bar className="left-[7px] w-[50px] bg-[#0078d4]" />}><Edge /></Slot>
        <Slot className="w-[62px]"><Store /></Slot>
        <Slot className="w-[62px]"><Mail /></Slot>
        <Slot className="w-[62px]" bar={<><Bar className="left-[7px] w-[41px] bg-[#0078d4]" /><Bar className="left-[48px] w-[10px] bg-[#62a8e5]" /></>}><Folder /></Slot>
        <Slot className="w-[62px]">
          <span className="flex h-[30px] w-[30px] items-center justify-center rounded-[4px] bg-[#ff0018] text-[13px] font-bold leading-none text-white">有道</span>
        </Slot>
        <Slot className="w-[62px]"><Bird /></Slot>
        <Slot className="w-[62px] bg-[#f5eff7]" bar={<Bar className="left-0 w-full bg-[#0078d4]" />}><ExcelIcon /></Slot>
        <Slot className="w-[62px]" bar={<Bar className="left-[6px] w-[51px] bg-[#0078d4]" />}><Paint /></Slot>
        <Slot className="w-[62px]" bar={<Bar className="left-[6px] w-[51px] bg-[#0078d4]" />}><VS /></Slot>
        <svg width="14" height="9" viewBox="0 0 14 9" fill="none" stroke="#111" strokeWidth="1.2" className="ml-[458px] shrink-0"><path d="M1 8l6-7 6 7" /></svg>
        <div className="relative ml-[13px] h-[28px] w-[19px] shrink-0">
          <svg width="19" height="12" viewBox="0 0 19 12" fill="#222"><path d="M4 0l4 3-4 3-4-3zM14 0l4 3-4 3-4-3zM9 6l4 3-4 3-4-3zM16 6l3 3-3 3-3-3z" /></svg>
          <span className="absolute bottom-0 left-0 flex h-[14px] w-[11px] items-center justify-center rounded-[2px] bg-[#d6002a] text-[11px] font-bold leading-none text-white">1</span>
        </div>
        <span className="ml-[11px] flex h-[20px] w-[18px] shrink-0 items-center justify-center text-[18px] font-bold leading-none text-white [-webkit-text-stroke:0.7px_#444]">中</span>
        <span className="ml-[18px]"><Sogou size="h-[19px] w-[19px] text-[15px]" /></span>
        <div className="ml-[24px] flex w-[84px] shrink-0 flex-col items-center whitespace-nowrap text-[15px] leading-[24px] text-[#222]">
          <span>1:37</span>
          <span>2021-05-28</span>
        </div>
        <div className="relative ml-[22px] h-[30px] w-[30px] shrink-0">
          <svg width="20" height="20" viewBox="0 0 20 20"><path d="M0 0h20v15H6l-3 4v-4H0z" fill="#111" /><path d="M4 4h12M4 7.5h12M4 11h12" stroke="#fff" strokeWidth="1.2" /></svg>
          <span className="absolute bottom-0 right-0 flex h-[20px] w-[20px] items-center justify-center rounded-full border border-[#777] bg-[#d0d0d0] text-[14px] font-bold leading-none text-black">3</span>
        </div>
      </div>

      {/* floating Sogou input bar */}
      <div className="absolute left-[1690px] top-[499px] flex h-[30px] items-center">
        <Sogou size="z-10 h-[26px] w-[26px] text-[22px]" />
        <div className="-ml-[4px] flex h-[24px] w-[163px] items-center border border-[#a9c4dd] bg-[#f8fbfe] pl-[10px] text-[#1f74c4]">
          <span className="w-[16px] text-[15px] font-bold leading-none">中</span>
          <svg width="14" height="14" viewBox="0 0 14 14" fill="#1f74c4" className="ml-[8px]"><path d="M10 0c2 6-2 11-9 9 2 3 4 5 7 5 5 0 7-9 2-14z" /></svg>
          <span className="ml-[9px] w-[12px] text-[13px] font-bold leading-none">°,</span>
          <svg width="17" height="13" viewBox="0 0 17 13" className="ml-[8px]"><rect width="17" height="13" rx="1" fill="#1f74c4" /><path d="M2 3.5h13M2 6.5h13" stroke="#fff" strokeDasharray="1.5 1" /><path d="M4 10h9" stroke="#fff" /></svg>
          <svg width="14" height="14" viewBox="0 0 14 14" fill="#a9bcd4" className="ml-[7px]"><circle cx="6" cy="3.5" r="3" /><path d="M0 13c0-5 3-6 6-6s5 1 5 3v3z" /></svg>
          <svg width="15" height="13" viewBox="0 0 15 13" fill="#1f74c4" className="ml-[5px]"><path d="M4 0h2l1.5 1.5L9 0h2l4 3-2 3-1-1v8H3V5L2 6 0 3z" /></svg>
          <svg width="14" height="14" viewBox="0 0 14 14" fill="none" stroke="#1f74c4" strokeWidth="2.4" className="ml-[7px]"><path d="M1 13l7-7" /><circle cx="10" cy="4" r="2.6" strokeWidth="1.6" /></svg>
        </div>
      </div>
    </div>
  );
}
